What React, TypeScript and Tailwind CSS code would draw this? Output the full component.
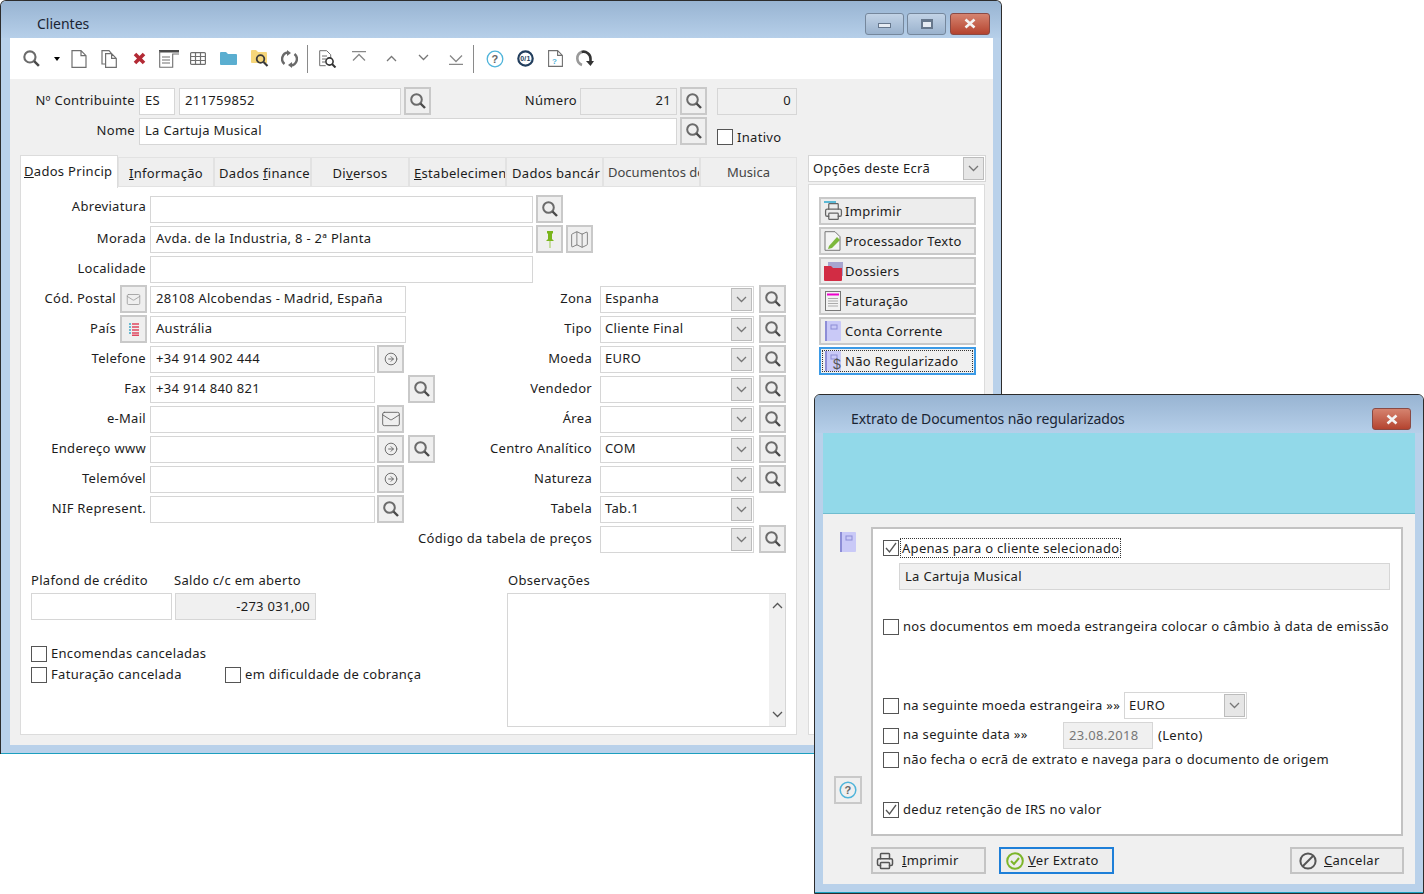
import type { ReactNode } from "react";
import { CircleArrowRight, Mail, Map as MapIcon, Printer } from "lucide-react";

const FIELD = "h-[27px] shrink-0 border border-[#d6d6d6] px-[5px] flex items-center whitespace-nowrap overflow-hidden";

function Search({ size = 18 }: { size?: number }) {
  return (
    <svg width={size} height={size} viewBox="0 0 18 18" fill="none">
      <circle cx="7.5" cy="7.5" r="5.3" stroke="#6b6b6b" strokeWidth="2" />
      <path d="M11.5 11.5L16 16" stroke="#4a4a4a" strokeWidth="2.4" />
    </svg>
  );
}

function Chevron({ up = false, color = "#777" }: { up?: boolean; color?: string }) {
  return (
    <svg width="11" height="7" viewBox="0 0 11 7" fill="none">
      <path d={up ? "M1 6l4.5-4.5L10 6" : "M1 1l4.5 4.5L10 1"} stroke={color} strokeWidth="1.3" />
    </svg>
  );
}

function Book({ size = 20, dollar = false }: { size?: number; dollar?: boolean }) {
  return (
    <svg width={size} height={size} viewBox="0 0 20 20">
      <rect x="2" y="0" width="16" height="20" rx="1" fill="#c9c9f7" />
      <rect x="2" y="0" width="2" height="20" fill="#8d8dd6" />
      <rect x="8" y="4" width="6" height="4" fill="none" stroke="#8d8dd6" strokeWidth="1" />
      {dollar && (
        <text x="10" y="18" fontSize="14" fill="#555" fontFamily="Liberation Sans, sans-serif">
          $
        </text>
      )}
    </svg>
  );
}

function Btn({ children, className = "" }: { children: ReactNode; className?: string }) {
  return (
    <div className={`h-[28px] w-[27px] shrink-0 flex items-center justify-center bg-[#efefef] border-2 border-[#c9c9c9] ${className}`}>
      {children}
    </div>
  );
}

function Field({ w, text, gray = false, right = false }: { w: string; text?: string; gray?: boolean; right?: boolean }) {
  return (
    <div className={`${FIELD} ${w} ${gray ? "bg-[#f0f0f0]" : "bg-white"} ${right ? "justify-end" : ""}`}>{text}</div>
  );
}

function Combo({ text, w = "w-[154px]" }: { text?: string; w?: string }) {
  return (
    <div className={`h-[27px] shrink-0 bg-white border border-[#d6d6d6] pl-[4px] pr-[1px] flex items-center justify-between ${w}`}>
      <span>{text}</span>
      <div className="w-[21px] h-[23px] bg-[#e6e6e6] border border-[#bcbcbc] flex items-center justify-center">
        <Chevron />
      </div>
    </div>
  );
}

function Check({ checked = false }: { checked?: boolean }) {
  return (
    <div className="w-[16px] h-[16px] shrink-0 bg-white border border-[#555] flex items-center justify-center">
      {checked && (
        <svg width="14" height="14" viewBox="0 0 14 14" fill="none">
          <path d="M2 7l3.5 4L12 2" stroke="#555" strokeWidth="1.3" />
        </svg>
      )}
    </div>
  );
}

function WinButton({ w, close = false, children }: { w: string; close?: boolean; children: ReactNode }) {
  return (
    <div
      className={`h-[22px] ${w} rounded-[3px] border flex items-center justify-center ${
        close ? "border-[#8a4a44] bg-gradient-to-b from-[#d5836f] to-[#b4432f]" : "border-[#75879c] bg-gradient-to-b from-[#c2d3e6] to-[#9ab2cd]"
      }`}
    >
      {children}
    </div>
  );
}

function CloseGlyph() {
  return (
    <svg width="14" height="11" viewBox="0 0 14 11" fill="none">
      <path d="M2.5 1.5l9 8M11.5 1.5l-9 8" stroke="#f4f4f4" strokeWidth="2.6" />
    </svg>
  );
}

function Sep() {
  return <div className="w-[1px] h-[28px] bg-[#8a8a8a]" />;
}

function Toolbar() {
  const line = { stroke: "#6f6f6f", fill: "none", strokeWidth: 1.2 };
  return (
    <div className="h-[41px] bg-white flex items-center text-[#555]">
      <div className="w-[42px] flex justify-center"><Search size={19} /></div>
      <div className="w-[10px] flex justify-center">
        <div className="border-x-[3.5px] border-x-transparent border-t-[4px] border-t-black" />
      </div>
      <div className="w-[30px] ml-[2px] flex justify-center">
        <svg width="16" height="18" viewBox="0 0 16 18" {...line}><path d="M1 .7h9l5 5v11.6H1zM10 .7v5h5" /></svg>
      </div>
      <div className="w-[30px] flex justify-center">
        <svg width="16" height="18" viewBox="0 0 16 18" {...line}><path d="M4.6 3.7h6l4.7 4.7v9H4.6zM10.6 3.7v4.7h4.7M4.6 14H1V.7h7l2.6 3" /></svg>
      </div>
      <div className="w-[30px] flex justify-center">
        <svg width="13" height="13" viewBox="0 0 13 13" fill="none"><path d="M2 2l9 9M11 2l-9 9" stroke="#b32a35" strokeWidth="3.6" /></svg>
      </div>
      <div className="w-[29px] flex justify-center">
        <svg width="20" height="18" viewBox="0 0 20 18" fill="none">
          <path d="M0 1h20" stroke="#4a4a4a" strokeWidth="3" />
          <path d="M.7 1v16.3h13V4H20M3 7h8M3 10h8M3 13h8" stroke="#6f6f6f" strokeWidth="1.1" />
        </svg>
      </div>
      <div className="w-[30px] flex justify-center">
        <svg width="16" height="13" viewBox="0 0 16 13" {...line}><rect x=".6" y=".6" width="14.8" height="11.8" rx="1" /><path d="M.6 4.5h14.8M.6 8.5h14.8M5.5.6v11.8M10.5.6v11.8" /></svg>
      </div>
      <div className="w-[31px] flex justify-center">
        <svg width="17" height="13" viewBox="0 0 17 13"><path d="M0 1a1 1 0 011-1h5l2 2h8a1 1 0 011 1v9a1 1 0 01-1 1H1a1 1 0 01-1-1z" fill="#5aaed0" /></svg>
      </div>
      <div className="w-[31px] flex justify-center">
        <svg width="18" height="17" viewBox="0 0 18 17" fill="none">
          <path d="M0 1a1 1 0 011-1h4l2 2h8a1 1 0 011 1v10H1a1 1 0 01-1-1z" fill="#f6d67a" />
          <circle cx="9.5" cy="9" r="3.8" stroke="#3a3a3a" strokeWidth="1.8" />
          <path d="M12.5 12l4 4" stroke="#3a3a3a" strokeWidth="2.2" />
        </svg>
      </div>
      <div className="w-[29px] flex justify-center">
        <svg width="17" height="18" viewBox="0 0 17 18" fill="none">
          <path d="M7 2.5A6.5 6.5 0 003.5 14" stroke="#6a6a6a" strokeWidth="2.4" />
          <path d="M10 15.5A6.5 6.5 0 0013.5 4" stroke="#6a6a6a" strokeWidth="2.4" />
          <path d="M6 0l4 3-4 3z" fill="#6a6a6a" />
          <path d="M11 18l-4-3 4-3z" fill="#6a6a6a" />
        </svg>
      </div>
      <div className="w-[7px] flex justify-center"><Sep /></div>
      <div className="w-[21px] ml-[6px] flex justify-center">
        <svg width="18" height="18" viewBox="0 0 18 18" fill="none">
          <path d="M.7.7h7l4 4v3M.7.7v15h6M3 6h5M3 9h4M3 12h3" stroke="#6f6f6f" strokeWidth="1" />
          <circle cx="10.5" cy="11.5" r="3.6" stroke="#333" strokeWidth="1.6" />
          <path d="M13 14l3.5 3.5" stroke="#333" strokeWidth="2" />
        </svg>
      </div>
      <div className="w-[41px] flex justify-center mt-[-4px]">
        <svg width="14" height="11" viewBox="0 0 14 11" fill="none" stroke="#888" strokeWidth="1.3"><path d="M0 .7h14M1 9.5l6-6 6 6" /></svg>
      </div>
      <div className="w-[25px] flex justify-center mt-[-1px]"><Chevron up /></div>
      <div className="w-[39px] flex justify-center mt-[-2px]"><Chevron /></div>
      <div className="w-[26px] flex justify-center mt-[1px]">
        <svg width="14" height="11" viewBox="0 0 14 11" fill="none" stroke="#888" strokeWidth="1.3"><path d="M0 10.3h14M1 1.5l6 6 6-6" /></svg>
      </div>
      <div className="w-[10px] flex justify-center ml-[-1px]"><Sep /></div>
      <div className="w-[30px] ml-[2px] flex justify-center">
        <svg width="18" height="18" viewBox="0 0 18 18" fill="none">
          <circle cx="9" cy="9" r="7.8" stroke="#4fb4da" strokeWidth="1.3" />
          <text x="9" y="13" textAnchor="middle" fontSize="11" fontWeight="700" fill="#666" fontFamily="Liberation Sans, sans-serif">?</text>
        </svg>
      </div>
      <div className="w-[30px] flex justify-center">
        <svg width="17" height="17" viewBox="0 0 17 17" fill="none">
          <circle cx="8.5" cy="8.5" r="7.2" stroke="#233f5e" strokeWidth="2.2" />
          <text x="8.5" y="11" textAnchor="middle" fontSize="7" fontWeight="700" fill="#233f5e" fontFamily="Liberation Sans, sans-serif">0/1</text>
        </svg>
      </div>
      <div className="w-[30px] flex justify-center">
        <svg width="15" height="17" viewBox="0 0 15 17" fill="none">
          <path d="M.6.6h9l4.8 4.8v11H.6zM9.6.6v4.8h4.8" stroke="#6f6f6f" strokeWidth="1.1" />
          <text x="6.5" y="13.5" textAnchor="middle" fontSize="8" fontWeight="700" fill="#4fb4da" fontFamily="Liberation Sans, sans-serif">?</text>
        </svg>
      </div>
      <div className="w-[30px] flex justify-center">
        <svg width="18" height="17" viewBox="0 0 18 17" fill="none">
          <path d="M6 15A7 7 0 015.5 2" stroke="#9a9a9a" strokeWidth="2.6" />
          <path d="M5.5 2A7 7 0 0114.5 9v4" stroke="#333" strokeWidth="2.6" />
          <path d="M10 11l4.5 5 3.5-5z" fill="#333" />
        </svg>
      </div>
    </div>
  );
}

function Tab({ label, w, pl, active = false, muted = false }: { label: ReactNode; w: string; pl?: string; active?: boolean; muted?: boolean }) {
  return (
    <div
      className={`${w} shrink-0 overflow-hidden whitespace-nowrap flex items-center relative ${pl ?? "justify-center"} ${
        active
          ? "h-[33px] bg-white border border-b-0 border-[#dcdcdc] z-10 pb-[1px]"
          : `h-[30px] mt-[2px] bg-[#efefef] border border-[#e2e2e2] ${muted ? "pt-[2px] tracking-[0px] text-[#444]" : "pt-[4px]"}`
      }`}
    >
      {label}
    </div>
  );
}

function Label({ w = "w-[125px]", children }: { w?: string; children: ReactNode }) {
  return <div className={`${w} shrink-0 flex justify-end whitespace-nowrap`}>{children}</div>;
}

function RightCol({ label, value, search = true }: { label: string; value?: string; search?: boolean }) {
  return (
    <div className="flex items-center">
      <Label w="w-[151px]">{label}</Label>
      <div className="ml-[8px]"><Combo text={value} /></div>
      {search && <Btn className="ml-[5px]"><Search /></Btn>}
    </div>
  );
}

function Row({ left, right }: { left?: ReactNode; right?: ReactNode }) {
  return (
    <div className="h-[30px] flex items-center">
      <div className="w-[420px] shrink-0 flex items-center">{left}</div>
      {right}
    </div>
  );
}

function ArrowBtn({ className = "" }: { className?: string }) {
  return (
    <Btn className={className}>
      <CircleArrowRight size={14} color="#666" strokeWidth={1.6} />
    </Btn>
  );
}

function FormTab() {
  const phone = "w-[225px]";
  return (
    <div className="h-[549px] bg-white border border-[#dcdcdc] pt-[7px]">
      <Row left={<><Label><span className="-mt-[4px]">Abreviatura</span></Label><div className="ml-[4px]"><Field w="w-[383px]" /></div><Btn className="ml-[3px]"><Search /></Btn></>} />
      <Row
        left={
          <>
            <Label>Morada</Label>
            <div className="ml-[4px]"><Field w="w-[383px]" text="Avda. de la Industria, 8 - 2ª Planta" /></div>
            <Btn className="ml-[3px]">
              <svg width="10" height="17" viewBox="0 0 10 17"><path d="M2 0h6v2L7 3v5l2 2H1l2-2V3L2 2z" fill="#7ab51d" /><path d="M5 10v7" stroke="#a9cf6b" strokeWidth="1.2" /></svg>
            </Btn>
            <Btn className="ml-[3px]"><MapIcon size={21} color="#777" strokeWidth={1} /></Btn>
          </>
        }
      />
      <Row left={<><Label>Localidade</Label><div className="ml-[4px]"><Field w="w-[383px]" /></div></>} />
      <Row
        left={<><Label w="w-[95px]">Cód. Postal</Label><Btn className="ml-[4px]"><Mail size={15} color="#999" strokeWidth={1.3} /></Btn><div className="ml-[3px]"><Field w="w-[256px]" text="28108 Alcobendas - Madrid, España" /></div></>}
        right={<RightCol label="Zona" value="Espanha" />}
      />
      <Row
        left={
          <>
            <Label w="w-[95px]">País</Label>
            <Btn className="ml-[4px]">
              <svg width="10" height="13" viewBox="0 0 10 13" fill="none">
                <path d="M0 1h2M0 4h2M0 7h2M0 10h2" stroke="#3ea8c8" strokeWidth="1.4" />
                <path d="M3 1h7M3 4h7M3 7h7M3 10h7M3 12.3h7" stroke="#e0475f" strokeWidth="1.4" />
              </svg>
            </Btn>
            <div className="ml-[3px]"><Field w="w-[256px]" text="Austrália" /></div>
          </>
        }
        right={<RightCol label="Tipo" value="Cliente Final" />}
      />
      <Row left={<><Label>Telefone</Label><div className="ml-[4px]"><Field w={phone} text="+34 914 902 444" /></div><ArrowBtn className="ml-[2px]" /></>} right={<RightCol label="Moeda" value="EURO" />} />
      <Row left={<><Label>Fax</Label><div className="ml-[4px]"><Field w={phone} text="+34 914 840 821" /></div><Btn className="ml-[33px]"><Search /></Btn></>} right={<RightCol label="Vendedor" />} />
      <Row left={<><Label>e-Mail</Label><div className="ml-[4px]"><Field w={phone} /></div><Btn className="ml-[2px]"><Mail size={20} color="#666" strokeWidth={1.1} /></Btn></>} right={<RightCol label="Área" />} />
      <Row left={<><Label>Endereço www</Label><div className="ml-[4px]"><Field w={phone} /></div><ArrowBtn className="ml-[2px]" /><Btn className="ml-[4px]"><Search /></Btn></>} right={<RightCol label="Centro Analítico" value="COM" />} />
      <Row left={<><Label>Telemóvel</Label><div className="ml-[4px]"><Field w={phone} /></div><ArrowBtn className="ml-[2px]" /></>} right={<RightCol label="Natureza" />} />
      <Row left={<><Label>NIF Represent.</Label><div className="ml-[4px]"><Field w={phone} /></div><Btn className="ml-[2px]"><Search /></Btn></>} right={<RightCol label="Tabela" value="Tab.1" search={false} />} />
      <Row right={<RightCol label="Código da tabela de preços" />} />

      <div className="mt-[17px] pl-[10px] flex">
        <div className="w-[476px] shrink-0">
          <div className="h-[22px] flex">
            <span className="w-[143px]">Plafond de crédito</span>
            <span>Saldo c/c em aberto</span>
          </div>
          <div className="flex gap-[3px]">
            <Field w="w-[141px]" />
            <Field w="w-[141px]" gray right text="-273 031,00" />
          </div>
          <div className="mt-[26px] h-[16px] flex items-center gap-[4px]"><Check />Encomendas canceladas</div>
          <div className="mt-[5px] h-[16px] flex items-center">
            <div className="w-[194px] flex items-center gap-[4px]"><Check />Faturação cancelada</div>
            <div className="flex items-center gap-[4px]"><Check />em dificuldade de cobrança</div>
          </div>
        </div>
        <div>
          <div className="h-[22px] pl-[1px]">Observações</div>
          <div className="w-[279px] h-[134px] border border-[#d6d6d6] bg-white flex justify-end">
            <div className="w-[16px] bg-[#f0f0f0] flex flex-col items-center justify-between py-[8px]">
              <Chevron up color="#555" />
              <Chevron color="#555" />
            </div>
          </div>
        </div>
      </div>
    </div>
  );
}

function SideButton({ icon, label, focused = false }: { icon: ReactNode; label: string; focused?: boolean }) {
  return (
    <div className={`h-[28px] flex items-center relative bg-[#ededed] border-2 ${focused ? "border-[#3b9ae6] bg-[#f0f0f0]" : "border-[#c9c9c9]"}`}>
      <div className={`absolute inset-[1px] ${focused ? "border border-dotted border-[#333]" : ""}`} />
      <div className="w-[24px] shrink-0 flex justify-center">{icon}</div>
      <span className="whitespace-nowrap pt-[1px]">{label}</span>
    </div>
  );
}

function MainWindow() {
  return (
    <div className="absolute left-0 top-0 w-[1002px] h-[754px] bg-[#b9d1ea] border border-[#2c2c2c] border-b-0 rounded-t-[6px] overflow-hidden flex flex-col">
      <div className="h-[37px] shrink-0 bg-gradient-to-b from-[#98b4d2] to-[#b6cfe9] flex items-center pl-[36px] pr-[11px] text-[14px] text-[#1a2433] tracking-[0px]">
        <span className="mt-[8px]">Clientes</span>
        <div className="ml-auto mt-[8px] flex gap-[3px]">
          <WinButton w="w-[39px]"><div className="w-[13px] h-[5px] mt-[4px] bg-[#e6ecf3] border border-[#66778c]" /></WinButton>
          <WinButton w="w-[39px]"><div className="w-[12px] h-[10px] bg-[#e6ecf3] border-2 border-[#66778c] border-t-[3px]" /></WinButton>
          <div className="ml-[1px]"><WinButton w="w-[40px]" close><CloseGlyph /></WinButton></div>
        </div>
      </div>
      <div className="ml-[9px] w-[983px]">
        <Toolbar />
        <div className="h-[666px] bg-[#f0f0f0] pt-[8px] px-[10px]">
          <div className="h-[28px] flex items-center -ml-[10px]">
            <Label>Nº Contribuinte</Label>
            <div className="ml-[4px]"><Field w="w-[36px]" text="ES" /></div>
            <div className="ml-[4px]"><Field w="w-[222px]" text="211759852" /></div>
            <Btn className="ml-[3px]"><Search /></Btn>
            <Label w="w-[146px]">Número</Label>
            <div className="ml-[3px]"><Field w="w-[97px]" gray right text="21" /></div>
            <Btn className="ml-[3px]"><Search /></Btn>
            <div className="ml-[10px]"><Field w="w-[80px]" gray right text="0" /></div>
          </div>
          <div className="h-[28px] mt-[2px] flex items-center -ml-[10px]">
            <Label>Nome</Label>
            <div className="ml-[4px]"><Field w="w-[538px]" text="La Cartuja Musical" /></div>
            <Btn className="ml-[3px]"><Search /></Btn>
            <div className="ml-[10px] mt-[12px] flex items-center gap-[4px]"><Check /><span className="pt-[1px]">Inativo</span></div>
          </div>
          <div className="mt-[10px] flex">
            <div className="w-[777px] shrink-0">
              <div className="h-[31px] flex">
                <Tab active w="w-[98px]" pl="pl-[3px]" label={<span><u>D</u>ados Princip</span>} />
                <Tab w="w-[96px]" label={<span><u>I</u>nformação</span>} />
                <Tab w="w-[97px]" pl="pl-[4px]" label={<span>Dados <u>f</u>inance</span>} />
                <Tab w="w-[98px]" label={<span>Di<u>v</u>ersos</span>} />
                <Tab w="w-[97px]" pl="pl-[4px]" label={<span><u>E</u>stabelecimen</span>} />
                <Tab w="w-[97px]" pl="pl-[5px]" label="Dados bancár" />
                <Tab w="w-[97px]" pl="pl-[4px]" muted label="Documentos de" />
                <Tab w="w-[97px]" muted label="Musica" />
              </div>
              <FormTab />
            </div>
            <div className="w-[177px] ml-[11px] shrink-0">
              <Combo text="Opções deste Ecrã" w="w-[178px]" />
              <div className="mt-[2px] h-[551px] bg-white border border-[#dcdcdc] pt-[12px] pl-[10px] pr-[8px] flex flex-col gap-[2px]">
                <SideButton label="Imprimir" icon={<div className="relative"><div className="absolute -top-[1px] left-0 w-[12px] h-[2px] bg-[#5ab8d5]" /><Printer size={19} color="#666" strokeWidth={1.6} /></div>} />
                <SideButton
                  label="Processador Texto"
                  icon={
                    <svg width="18" height="20" viewBox="0 0 18 20" fill="none">
                      <path d="M1 .7h10l5 5v13.6H1z" fill="#f4f4f4" stroke="#777" />
                      <path d="M5 15l8-9 3 3-8 8-4 1z" fill="#7cb83c" />
                    </svg>
                  }
                />
                <SideButton
                  label="Dossiers"
                  icon={
                    <svg width="19" height="19" viewBox="0 0 19 19">
                      <rect x="4" y="0" width="15" height="14" fill="#a7a5cf" />
                      <path d="M0 4h7l2 2h9v12a1 1 0 01-1 1H1a1 1 0 01-1-1z" fill="#d22c44" />
                    </svg>
                  }
                />
                <SideButton
                  label="Faturação"
                  icon={
                    <svg width="16" height="20" viewBox="0 0 16 20" fill="none">
                      <rect x=".5" y=".5" width="15" height="19" fill="#f2f2f2" stroke="#777" />
                      <path d="M2 3.5h12" stroke="#ee00cc" strokeWidth="2" />
                      <path d="M3 7.5h10M3 10h10M3 12.5h10M3 15h10" stroke="#aaa" />
                    </svg>
                  }
                />
                <SideButton label="Conta Corrente" icon={<Book />} />
                <SideButton focused label="Não Regularizado" icon={<Book dollar />} />
              </div>
            </div>
          </div>
        </div>
      </div>
      <div className="flex-1" />
      <div className="h-[1px] bg-[#1c9fbf]" />
    </div>
  );
}

function DialogRow({ checked, children, className = "" }: { checked?: boolean; children?: ReactNode; className?: string }) {
  return (
    <div className={`flex items-center whitespace-nowrap ${className}`}>
      <Check checked={checked} />
      <div className="ml-[4px] flex items-center">{children}</div>
    </div>
  );
}

function DialogButton({ icon, label, w, primary = false }: { icon: ReactNode; label: ReactNode; w: string; primary?: boolean }) {
  return (
    <div className={`h-[27px] ${w} flex items-center bg-[#ededed] border-2 ${primary ? "border-[#1e7fd8]" : "border-[#c4c4c4]"}`}>
      {icon}
      {label}
    </div>
  );
}

function Dialog() {
  return (
    <div className="absolute left-[814px] top-[394px] w-[610px] h-[500px] bg-[#b9d1ea] border border-[#2c2c2c] rounded-t-[6px] overflow-hidden flex flex-col">
      <div className="h-[38px] shrink-0 bg-gradient-to-b from-[#98b4d2] to-[#b6cfe9] flex items-center pl-[36px] pr-[12px] text-[14px] text-[#1a2433] tracking-[-0.08px]">
        <span className="mt-[9px]">Extrato de Documentos não regularizados</span>
        <div className="ml-auto mt-[10px]"><WinButton w="w-[39px]" close><CloseGlyph /></WinButton></div>
      </div>
      <div className="mx-[8px] h-[81px] bg-[#92d9e9] border-b border-[#6fbccf]" />
      <div className="mx-[8px] h-[370px] bg-[#f0f0f0] pt-[13px]">
        <div className="flex h-[309px]">
          <div className="w-[48px] shrink-0 flex flex-col justify-between pt-[5px] pb-[32px]">
            <div className="ml-[15px]"><Book /></div>
            <div className="ml-[11px] w-[28px] h-[28px] bg-[#efefef] border-2 border-[#c9c9c9] flex items-center justify-center">
              <svg width="18" height="18" viewBox="0 0 18 18" fill="none">
                <circle cx="9" cy="9" r="7.8" stroke="#4fb4da" strokeWidth="1.5" />
                <text x="9" y="13" textAnchor="middle" fontSize="11" fontWeight="700" fill="#666" fontFamily="Liberation Sans, sans-serif">?</text>
              </svg>
            </div>
          </div>
          <div className="w-[532px] shrink-0 bg-white border-2 border-[#c2c2c2] pl-[10px] pt-[11px]">
            <DialogRow checked className="h-[16px]">
              <span className="border border-dotted border-[#333] px-[1px] -ml-[3px] leading-[18px]">Apenas para o cliente selecionado</span>
            </DialogRow>
            <div className="mt-[7px] ml-[16px]"><Field w="w-[491px]" gray text="La Cartuja Musical" /></div>
            <DialogRow className="mt-[29px] h-[16px]">nos documentos em moeda estrangeira colocar o câmbio à data de emissão</DialogRow>
            <DialogRow className="mt-[57px] h-[27px]">
              <span className="w-[221px]">na seguinte moeda estrangeira »»</span>
              <Combo text="EURO" w="w-[123px]" />
            </DialogRow>
            <DialogRow className="mt-[3px] h-[27px]">
              <span className="w-[160px] -mt-[2px]">na seguinte data »»</span>
              <div className="text-[#777]"><Field w="w-[90px]" gray text="23.08.2018" /></div>
              <span className="ml-[5px]">(Lento)</span>
            </DialogRow>
            <DialogRow className="mt-[3px] h-[16px]">não fecha o ecrã de extrato e navega para o documento de origem</DialogRow>
            <DialogRow checked className="mt-[34px] h-[16px]">deduz retenção de IRS no valor</DialogRow>
          </div>
        </div>
        <div className="mt-[11px] pl-[48px] pr-[11px] flex">
          <DialogButton
            w="w-[115px]"
            icon={<Printer size={18} color="#555" strokeWidth={2} className="ml-[3px]" />}
            label={<span className="ml-[8px]"><u>I</u>mprimir</span>}
          />
          <div className="ml-[13px]">
            <DialogButton
              primary
              w="w-[115px]"
              icon={
                <svg width="18" height="18" viewBox="0 0 18 18" fill="none" className="ml-[5px]">
                  <circle cx="9" cy="9" r="7.8" stroke="#7cb52a" strokeWidth="2" />
                  <path d="M5 9l3 3 5-6" stroke="#7cb52a" strokeWidth="2" />
                </svg>
              }
              label={<span className="ml-[4px]"><u>V</u>er Extrato</span>}
            />
          </div>
          <div className="ml-auto">
            <DialogButton
              w="w-[114px]"
              icon={
                <svg width="18" height="18" viewBox="0 0 18 18" fill="none" className="ml-[7px]">
                  <circle cx="9" cy="9" r="7.6" stroke="#555" strokeWidth="2" />
                  <path d="M4 14L14 4" stroke="#555" strokeWidth="2" />
                </svg>
              }
              label={<span className="ml-[7px]"><u>C</u>ancelar</span>}
            />
          </div>
        </div>
      </div>
      <div className="flex-1" />
      <div className="h-[1px] bg-[#1c9fbf]" />
    </div>
  );
}

export default function App() {
  return (
    <div className="relative w-[1424px] h-[894px] overflow-hidden bg-white text-[13px] tracking-[0.3px] text-[#1c1c1c] font-['Noto_Sans',sans-serif]">
      <MainWindow />
      <Dialog />
    </div>
  );
}
